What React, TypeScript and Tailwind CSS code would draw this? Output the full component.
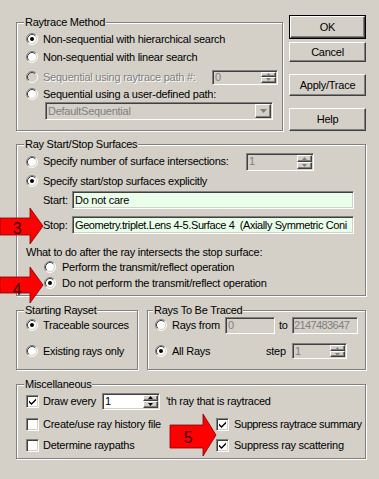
import React from 'react';

const sunken =
  'border border-t-[#808080] border-l-[#808080] border-r-white border-b-white shadow-[inset_1px_1px_0_#404040,inset_-1px_-1px_0_#d4d0c8]';
const raised =
  'border border-t-white border-l-white border-r-[#404040] border-b-[#404040] shadow-[inset_-1px_-1px_0_#808080]';
const group =
  'border border-[#808080] shadow-[inset_1px_1px_0_#fff,1px_1px_0_#fff]';
const legend = 'bg-[#d4d0c8] px-[1px] -ml-[2px] leading-[13px]';
const grayText = 'text-[#808080] [text-shadow:1px_1px_0_#fff]';

const Radio = ({ checked = false, disabled = false }: { checked?: boolean; disabled?: boolean }) => (
  <svg width="12" height="12" viewBox="0 0 12 12" className="shrink-0">
    <circle cx="6" cy="6" r="5" fill={disabled ? '#d4d0c8' : '#fff'} />
    <path d="M2.11 9.89A5.5 5.5 0 0 1 9.89 2.11" fill="none" stroke="#808080" />
    <path d="M9.89 2.11A5.5 5.5 0 0 1 2.11 9.89" fill="none" stroke="#fff" />
    <path d="M2.82 9.18A4.5 4.5 0 0 1 9.18 2.82" fill="none" stroke="#404040" />
    <path d="M9.18 2.82A4.5 4.5 0 0 1 2.82 9.18" fill="none" stroke="#d4d0c8" />
    {checked && <circle cx="6" cy="6" r="2" fill={disabled ? '#808080' : '#000'} />}
  </svg>
);

const Check = ({ checked = false }: { checked?: boolean }) => (
  <span className={`${sunken} w-[13px] h-[13px] shrink-0 bg-white flex items-center justify-center`}>
    {checked && (
      <svg width="7" height="7" viewBox="0 0 7 7">
        <polygon points="0,2.5 2.5,5 7,0.5 7,2.5 2.5,7 0,4.5" fill="#000" />
      </svg>
    )}
  </span>
);

const Arrow = ({ up, disabled }: { up?: boolean; disabled?: boolean }) => (
  <svg width="5" height="3" viewBox="0 0 5 3">
    <polygon points={up ? '2.5,0 5,3 0,3' : '0,0 5,0 2.5,3'} fill={disabled ? '#808080' : '#000'} />
  </svg>
);

const Spin = ({ value, className, disabled }: { value: string; className: string; disabled?: boolean }) => (
  <div className={`${sunken} ${className} flex ${disabled ? 'bg-[#d4d0c8]' : 'bg-white'}`}>
    <span className={`flex-1 pl-[2px] flex items-center ${disabled ? 'text-[#808080]' : ''}`}>{value}</span>
    <div className="w-[15px] m-[1px] flex flex-col">
      <div className={`${raised} flex-1 flex items-center justify-center bg-[#d4d0c8]`}>
        <Arrow up disabled={disabled} />
      </div>
      <div className={`${raised} flex-1 flex items-center justify-center bg-[#d4d0c8]`}>
        <Arrow disabled={disabled} />
      </div>
    </div>
  </div>
);

const Button = ({ label, className }: { label: string; className: string }) => (
  <div className={`${raised} ${className} bg-[#d4d0c8] flex items-center justify-center`}>{label}</div>
);

export default function App() {
  return (
    <div className="relative w-[379px] h-[479px] overflow-hidden bg-[#d4d0c8] text-black text-[11px] leading-[13px] tracking-[-0.25px] whitespace-nowrap font-['Liberation_Sans',Arial,sans-serif]">
      <div className="pl-[16px] pt-[14px] w-[366px]">
        <div className="flex gap-[6px]">
          <fieldset className={`${group} w-[267px] mt-[2px] pl-[9px] pb-[9px]`}>
            <legend className={legend}>Raytrace Method</legend>
            <div className="pt-[1px]">
              <div className="h-[18px] flex items-center gap-[5px]">
                <Radio checked />
                <span>Non-sequential with hierarchical search</span>
              </div>
              <div className="h-[18px] flex items-center gap-[5px]">
                <Radio />
                <span>Non-sequential with linear search</span>
              </div>
              <div className="h-[18px] mt-[2px] flex items-center gap-[5px]">
                <Radio disabled />
                <span className={`${grayText} w-[164px]`}>Sequential using raytrace path #:</span>
                <Spin value="0" disabled className="w-[66px] h-[15px]" />
              </div>
              <div className="h-[16px] flex items-center gap-[5px]">
                <Radio />
                <span>Sequential using a user-defined path:</span>
              </div>
              <div className={`${sunken} ml-[19px] w-[228px] h-[18px] flex bg-[#d4d0c8]`}>
                <span className="flex-1 pl-[2px] flex items-center text-[#808080]">DefaultSequential</span>
                <div className={`${raised} w-[16px] m-[1px] flex items-center justify-center`}>
                  <svg width="7" height="4" viewBox="0 0 7 4">
                    <polygon points="0,0 7,0 3.5,4" fill="#808080" />
                  </svg>
                </div>
              </div>
            </div>
          </fieldset>
          <div className="flex flex-col w-[77px]">
            <div className="mt-[1px] h-[24px] border border-black flex">
              <Button label="OK" className="flex-1" />
            </div>
            <Button label="Cancel" className="mt-[3px] h-[20px]" />
            <Button label="Apply/Trace" className="mt-[12px] h-[22px]" />
            <Button label="Help" className="mt-[12px] h-[23px]" />
          </div>
        </div>

        <fieldset className={`${group} mt-[7px] w-[350px] pl-[9px] pb-[4px]`}>
          <legend className={legend}>Ray Start/Stop Surfaces</legend>
          <div className="h-[21px] flex items-center gap-[5px]">
            <Radio />
            <span className="w-[198px]">Specify number of surface intersections:</span>
            <Spin value="1" disabled className="w-[68px] h-[18px]" />
          </div>
          <div className="h-[18px] flex items-center gap-[5px]">
            <Radio checked />
            <span>Specify start/stop surfaces explicitly</span>
          </div>
          <div className="mt-[1px] pl-[17px] flex items-center">
            <span className="w-[29px]">Start:</span>
            <div className={`${sunken} w-[282px] h-[18px] bg-[#eaffea] pl-[2px] flex items-center`}>Do not care</div>
          </div>
          <div className="mt-[7px] pl-[17px] flex items-center">
            <span className="w-[29px]">Stop:</span>
            <div className={`${sunken} w-[282px] h-[18px] bg-[#eaffea] pl-[2px] flex items-center overflow-hidden tracking-[-0.4px]`}>
              Geometry.triplet.Lens 4-5.Surface 4&nbsp;&nbsp;(Axially Symmetric Coni
            </div>
          </div>
          <div className="mt-[12px] h-[13px]">What to do after the ray intersects the stop surface:</div>
          <div className="pl-[18px]">
            <div className="h-[16px] flex items-center gap-[6px]">
              <Radio />
              <span>Perform the transmit/reflect operation</span>
            </div>
            <div className="h-[16px] flex items-center gap-[6px]">
              <Radio checked />
              <span>Do not perform the transmit/reflect operation</span>
            </div>
          </div>
        </fieldset>

        <div className="mt-[8px] flex gap-[9px]">
          <fieldset className={`${group} w-[122px] pl-[9px] pb-[10px]`}>
            <legend className={legend}>Starting Rayset</legend>
            <div className="h-[16px] flex items-center gap-[5px]">
              <Radio checked />
              <span>Traceable sources</span>
            </div>
            <div className="mt-[10px] h-[16px] flex items-center gap-[5px]">
              <Radio />
              <span>Existing rays only</span>
            </div>
          </fieldset>
          <fieldset className={`${group} w-[219px] pl-[7px] pb-[10px]`}>
            <legend className={legend}>Rays To Be Traced</legend>
            <div className="h-[16px] flex items-center">
              <Radio />
              <span className="ml-[5px] w-[53px]">Rays from</span>
              <div className={`${sunken} w-[50px] h-[17px] pl-[2px] flex items-center text-[#808080]`}>0</div>
              <span className="ml-[4px] w-[13px]">to</span>
              <div className={`${sunken} w-[66px] h-[17px] pl-[1px] flex items-center text-[#808080] tracking-[-0.6px] overflow-hidden`}>2147483647</div>
            </div>
            <div className="mt-[10px] h-[16px] flex items-center">
              <Radio checked />
              <span className="ml-[5px] w-[94px]">All Rays</span>
              <span className="w-[26px]">step</span>
              <Spin value="1" disabled className="w-[55px] h-[16px]" />
            </div>
          </fieldset>
        </div>

        <fieldset className={`${group} mt-[8px] w-[350px] pl-[9px] pb-[3px]`}>
          <legend className={legend}>Miscellaneous</legend>
          <div className="h-[20px] flex items-center">
            <Check checked />
            <span className="ml-[4px] w-[59px]">Draw every</span>
            <Spin value="1" className="w-[58px] h-[17px]" />
            <span className="ml-[6px]">'th ray that is raytraced</span>
          </div>
          <div className="mt-[3px] grid grid-cols-[190px_1fr] gap-y-[1px]">
            <div className="h-[20px] flex items-center gap-[4px]">
              <Check />
              <span>Create/use ray history file</span>
            </div>
            <div className="h-[20px] flex items-center gap-[5px]">
              <Check checked />
              <span className="tracking-[-0.4px]">Suppress raytrace summary</span>
            </div>
            <div className="h-[20px] flex items-center gap-[4px]">
              <Check />
              <span>Determine raypaths</span>
            </div>
            <div className="h-[20px] flex items-center gap-[5px]">
              <Check checked />
              <span>Suppress ray scattering</span>
            </div>
          </div>
        </fieldset>
      </div>

      <svg className="absolute inset-0 pointer-events-none" width="379" height="479" viewBox="0 0 379 479">
        <polygon points="0,218 30,218 30,208 43,226 30,244 30,235 0,235" fill="#ff0000" stroke="#800000" strokeWidth="0.8" />
        <text x="17" y="234" textAnchor="middle" fontSize="16" fontFamily="Liberation Sans, Arial, sans-serif" fill="#3b0000">3</text>
        <polygon points="0,277 30,277 30,267 43,285 30,303 30,293 0,293" fill="#ff0000" stroke="#800000" strokeWidth="0.8" />
        <text x="17" y="295" textAnchor="middle" fontSize="16" fontFamily="Liberation Sans, Arial, sans-serif" fill="#3b0000">4</text>
        <polygon points="170,425 203,425 203,414 216,435 203,456 203,448 170,448" fill="#ff0000" stroke="#800000" strokeWidth="0.8" />
        <text x="188" y="443" textAnchor="middle" fontSize="16" fontFamily="Liberation Sans, Arial, sans-serif" fill="#3b0000">5</text>
      </svg>
    </div>
  );
}
